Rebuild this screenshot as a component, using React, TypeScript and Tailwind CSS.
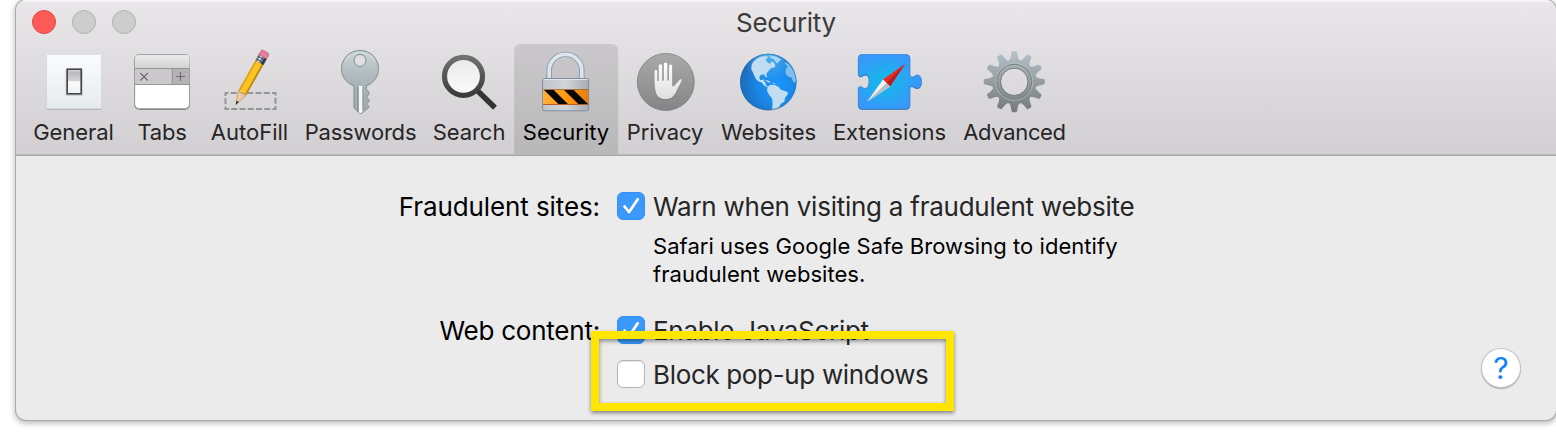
import type { ReactNode } from "react";

function GeneralIcon() {
  return (
    <svg width="70" height="70" viewBox="39 47 70 70">
      <defs>
        <linearGradient id="plate" x1="0" y1="0" x2="0" y2="1">
          <stop offset="0" stopColor="#fbfcfd" />
          <stop offset="1" stopColor="#e6eaee" />
        </linearGradient>
        <linearGradient id="lever" x1="0" y1="0" x2="0" y2="1">
          <stop offset="0" stopColor="#e9e9eb" />
          <stop offset="0.12" stopColor="#b9b9bd" />
          <stop offset="0.46" stopColor="#d2d2d5" />
          <stop offset="0.52" stopColor="#fafafa" />
          <stop offset="1" stopColor="#eef0f2" />
        </linearGradient>
      </defs>
      <rect x="46.5" y="55" width="55" height="54.7" rx="1" fill="#a3a5a8" />
      <rect x="46.5" y="54.5" width="55" height="54.3" rx="1" fill="url(#plate)" stroke="#d5d8db" strokeWidth="0.5" />
      <rect x="65.5" y="69" width="17.500" height="27" rx="1" fill="#b9bcc0" opacity="0.6" />
      <rect x="67.200" y="69.2" width="14" height="24.6" fill="url(#lever)" stroke="#45464b" strokeWidth="1.6" />
    </svg>
  );
}

function TabsIcon() {
  return (
    <svg width="70" height="70" viewBox="127 47 70 70">
      <defs>
        <linearGradient id="tabTop" x1="0" y1="0" x2="0" y2="1">
          <stop offset="0" stopColor="#ececec" />
          <stop offset="1" stopColor="#d3d1d3" />
        </linearGradient>
      </defs>
      <rect x="134.7" y="55" width="54.8" height="54.3" rx="4.5" fill="#fff" stroke="#77777a" strokeWidth="1" />
      <rect x="134.7" y="54.5" width="54.8" height="54" rx="4.5" fill="#fff" stroke="#939396" strokeWidth="0.8" />
      <path d="M135 68.500V59q0-4 4-4h46.500q4 0 4 4v9.500z" fill="url(#tabTop)" />
      <path d="M135 68.500h37.300v16H135z" fill="#cbc9cb" />
      <path d="M172.300 68.500h17v16h-17z" fill="#b4b2b5" />
      <path d="M135 68.500h54.500M135 84.500h54.500M172.300 68.500v16" stroke="#8e8c90" strokeWidth="0.900" />
      <path d="M140.300 73l7.500 7.500m0-7.500l-7.500 7.500M176 76.500h9m-4.500-4.500v9" stroke="#6d6c70" strokeWidth="1.200" fill="none" />
    </svg>
  );
}

function AutoFillIcon() {
  return (
    <svg width="70" height="70" viewBox="214.500 47 70 70">
      <rect x="225" y="93" width="50" height="16" fill="none" stroke="#959597" strokeWidth="2" strokeDasharray="6 2.250" strokeDashoffset="3" />
      <g transform="translate(235.300 104.700) rotate(29.300)">
        <path d="M-4.400-13L0 0L4.400-13z" fill="#ecc9a0" stroke="#a58762" strokeWidth="0.500" />
        <path d="M-1.300-3.800L0 0l1.300-3.800z" fill="#222" />
        <path d="M-4.600-49h9.200v36l-2.300-1.500l-2.300 1.500l-2.300-1.500l-2.300 1.500z" fill="#fcc321" />
        <path d="M-4.600-49h1.600v35l-1.600 1z" fill="#dda01a" />
        <path d="M2.800-49h1.800v36l-1.800-1.200z" fill="#b98518" />
        <rect x="-4.600" y="-55" width="9.200" height="7" fill="#77838d" />
        <rect x="-2.500" y="-55" width="2" height="7" fill="#dbe5e9" />
        <path d="M-4.600-50h9.200M-4.600-53h9.200" stroke="#3b4650" strokeWidth="0.900" />
        <path d="M2-55h2.600v7H2z" fill="#343c45" />
        <path d="M-4.600-55v-3.500q0-2.500 2.500-2.500h4.200q2.500 0 2.500 2.500v3.500z" fill="#e8799f" stroke="#b45a78" strokeWidth="0.500" />
      </g>
    </svg>
  );
}

function PasswordsIcon() {
  return (
    <svg width="70" height="70" viewBox="326 47 70 70">
      <defs>
        <linearGradient id="keyFill" x1="0" y1="0" x2="0" y2="1">
          <stop offset="0" stopColor="#c9d4d6" />
          <stop offset="0.500" stopColor="#a9b5b9" />
          <stop offset="1" stopColor="#a3a9ac" />
        </linearGradient>
      </defs>
      <path
        fillRule="evenodd"
        d="M360 50.500c10.500 0 18.500 8 18.500 18.200c0 8-5 14.300-12 17.300v3.500l2.300 2.500v2.500l-2.300 2.500l2.300 2.500v2.300l-2.300 2.300l2.300 2v1.500l-6.800 5.300q-1.500 1-3 0L354 107.500V86c-7.500-2.800-12.500-9.300-12.500-17.300c0-10.200 8-18.200 18.500-18.200zM360 54.400a6 6 0 1 0 0 12a6 6 0 1 0 0-12z"
        fill="url(#keyFill)"
        stroke="#828d91"
        strokeWidth="1"
      />
      <path d="M346 61q4-8 14-8.500q10 .500 14 8.500" stroke="#dce4e6" strokeWidth="1" fill="none" opacity="0.700" />
      <path d="M359 86h3.400v26l-1.400 1h-2z" fill="#f4f6f7" />
      <path d="M357.800 87v24" stroke="#868e92" strokeWidth="1" />
      <path d="M363 87v23" stroke="#8c9599" strokeWidth="0.800" />
    </svg>
  );
}

function SearchIcon() {
  return (
    <svg width="70" height="70" viewBox="434 47 70 70">
      <defs>
        <linearGradient id="lens" x1="0" y1="0" x2="0" y2="1">
          <stop offset="0" stopColor="#e9e9ea" />
          <stop offset="1" stopColor="#fbfbfb" />
        </linearGradient>
        <linearGradient id="rim" x1="0" y1="0" x2="0" y2="1">
          <stop offset="0" stopColor="#707070" />
          <stop offset="1" stopColor="#3b3b3b" />
        </linearGradient>
      </defs>
      <path d="M476 89.200L495 107.700" stroke="#343434" strokeWidth="5.500" />
      <circle cx="463.500" cy="76.300" r="19" fill="url(#lens)" stroke="url(#rim)" strokeWidth="5.200" />
    </svg>
  );
}

function SecurityIcon() {
  return (
    <svg width="70" height="70" viewBox="531 47 70 70">
      <defs>
        <linearGradient id="metal" x1="0" y1="0" x2="1" y2="0">
          <stop offset="0" stopColor="#bfc5ca" />
          <stop offset="0.500" stopColor="#d2d5d8" />
          <stop offset="1" stopColor="#a6acb3" />
        </linearGradient>
        <linearGradient id="hazard" x1="0" y1="0" x2="1" y2="0">
          <stop offset="0" stopColor="#ffae38" />
          <stop offset="0.600" stopColor="#ff950b" />
          <stop offset="1" stopColor="#e87d0c" />
        </linearGradient>
      </defs>
      <path d="M549.200 79V70.600a16.300 16.300 0 0 1 32.600 0V79" fill="none" stroke="#8496ab" strokeWidth="5.400" />
      <path d="M549.200 79V70.600a16.300 16.300 0 0 1 32.600 0V79" fill="none" stroke="#dce6ea" strokeWidth="3.700" />
      <rect x="542.600" y="78.500" width="46" height="32.300" rx="2" fill="url(#metal)" stroke="#7d8ca1" strokeWidth="1" />
      <path d="M543.500 79.500h44" stroke="#e7eaec" strokeWidth="0.900" />
      <rect x="543.200" y="89.500" width="45" height="15" fill="url(#hazard)" />
      <path d="M544 90h9.700l14.300 14h-9.700zM564 90h9.700l14.300 14h-9.700z" fill="#090703" />
      <path d="M543.200 89.500h45" stroke="#9b6a24" strokeWidth="0.800" />
      <path d="M543.200 104.500h45" stroke="#b95e22" strokeWidth="1" />
    </svg>
  );
}

function PrivacyIcon() {
  const hand =
    "M655 84V71.500q0-1.700 1.400-1.700q1.400 0 1.400 1.700V81h1.400V66q0-1.800 1.700-1.800q1.700 0 1.700 1.800v14.500h1.700V64.300q0-1.700 1.800-1.700q1.800 0 1.800 1.700V80.500h1.600V66.200q0-1.700 1.600-1.700q1.600 0 1.600 1.700V86q1.500 1 3-1.200l4-4.600q1.200-1.400 2.500-.6q-.2 2.600-2.200 5.700q-2.300 4-3.600 7q-2.800 7-10.700 7q-8 0-9.500-7.200q-1-4-1-8.100z";
  return (
    <svg width="70" height="70" viewBox="630.500 47 70 70">
      <defs>
        <linearGradient id="disc" x1="0" y1="0" x2="0" y2="1">
          <stop offset="0" stopColor="#a9a9a9" />
          <stop offset="1" stopColor="#858587" />
        </linearGradient>
        <linearGradient id="palm" x1="0" y1="0" x2="0" y2="1">
          <stop offset="0" stopColor="#fff" />
          <stop offset="1" stopColor="#dededf" />
        </linearGradient>
      </defs>
      <circle cx="666.300" cy="82" r="28.500" fill="url(#disc)" stroke="#7f7f81" strokeWidth="0.800" />
      <path d={hand} fill="#68686a" opacity="0.550" transform="translate(0 1)" />
      <path d={hand} fill="url(#palm)" />
    </svg>
  );
}

function WebsitesIcon() {
  return (
    <svg width="70" height="70" viewBox="734 47 70 70">
      <defs>
        <radialGradient id="ocean" cx="0.660" cy="0.560" r="0.660">
          <stop offset="0" stopColor="#1a96fb" />
          <stop offset="0.550" stopColor="#1a86e4" />
          <stop offset="1" stopColor="#1c6bb8" />
        </radialGradient>
        <radialGradient id="shine" cx="0.500" cy="0" r="0.500">
          <stop offset="0" stopColor="#6fcaf8" stopOpacity="0.800" />
          <stop offset="1" stopColor="#55b8f5" stopOpacity="0" />
        </radialGradient>
        <clipPath id="globe">
          <circle cx="768.300" cy="82" r="28" />
        </clipPath>
      </defs>
      <circle cx="768.300" cy="83" r="28" fill="#9a9ca1" opacity="0.500" />
      <circle cx="768.300" cy="82" r="28.200" fill="url(#ocean)" />
      <circle cx="768.300" cy="82" r="28.200" fill="url(#shine)" />
      <g clipPath="url(#globe)" fill="#c0ddf2">
        <path d="M751.500 65.500l1.500-3.500l4-3.500l4.500-2l5-.5l1.500 1.500l-2.500 2l1 2l3.500 2.500l1.500-2.500l2.500 1l1.500 3.500l-1.500 1.500l-3 .5l-2.500 3l-2 2.500l.3 4l-1.300-.3l-1.200-2.700l-3.300.3l-1.700 2l.7 3l2.500.2l1.200-1l.3 2.500l1.500 1l.3 2.500l2.200 1.300l-1.500.7l-3-2l-1.500-2.200l-4-1.600l-2.700-3.200l-2-5l-2-3.500z" />
        <path d="M770 55.500l6 1l5.500 3l-2 1.500l-2 2.500l-2-1.500l-1.500-2.500l-3.500-2z" fill="#a8d6f3" />
        <path d="M764.500 80.300l3.500.2l3.300 1.700l-2.500.3zM772.500 82.800l3 .5l-1.500 1z" />
        <path d="M767.500 87l2.500-2.300l5 .3l4 2.200l1.500 2.300l7 2.500l.5 2l-3 3.700l-.7 4l-3.300 2l-2 3.500l-3.300 2.500l-1 4.500l-1.900.5l-.8-4l.6-6.500l-.4-5.500l-3.500-4.500l-1.700-4z" />
        <path d="M784 62.500l3 .5l3 2.500l4.500 7l1.800 6l-1 4.500l-2-1l-2-4.500l-3.500-1l-2.300-3.500l.2-4l1.800-2.500z" fill="#7fbfee" />
      </g>
      <circle cx="768.300" cy="82" r="27.800" fill="none" stroke="#1b65a7" strokeWidth="0.800" opacity="0.600" />
    </svg>
  );
}

function ExtensionsIcon() {
  const piece =
    "M861.500 54.500H906q4 0 4 4V75q.3 3 3.500 1.700q2.500-2.200 4.500-1.700q3.500 1 3.500 6.500q0 6.200-3.800 6.800q-2 .2-4.200-1.600q-3.500-1.500-3.500 2V105q0 4-4 4h-44q-3.700 0-3.700-4V89q.3-3.500 3.500-2q2.300 2 4 1.500q3.200-1 3.200-7t-2.700-6.800q-2.500-.5-4.500 1.500q-3 1.500-3.500-2V58.500q0-4 3.200-4z";
  return (
    <svg width="70" height="70" viewBox="855 47 70 70">
      <defs>
        <radialGradient id="puzzle" cx="0.420" cy="0.500" r="0.550">
          <stop offset="0" stopColor="#13bbe9" />
          <stop offset="0.500" stopColor="#24aaf0" />
          <stop offset="1" stopColor="#3996fb" />
        </radialGradient>
      </defs>
      <path d={piece} fill="#3a6da5" transform="translate(0 0.800)" />
      <path d={piece} fill="url(#puzzle)" stroke="#2f7fd5" strokeWidth="0.700" />
      <path d="M905 64L883 79.500L890 86.500z" fill="#ed2820" />
      <path d="M905 64L886.500 83L890 86.500z" fill="#b81c25" />
      <path d="M867.300 101.500L883 79.500L890 86.500z" fill="#f4f4f4" />
      <path d="M867.300 101.500L886.500 83L890 86.500z" fill="#b8bec3" />
    </svg>
  );
}

const teeth = [0, 30, 60, 90, 120, 150, 180, 210, 240, 270, 300, 330];

function AdvancedIcon() {
  return (
    <svg width="70" height="70" viewBox="979.500 47 70 70">
      <defs>
        <linearGradient id="steel" gradientUnits="userSpaceOnUse" x1="0" y1="51" x2="0" y2="113">
          <stop offset="0" stopColor="#b3c3c9" />
          <stop offset="0.500" stopColor="#959da0" />
          <stop offset="1" stopColor="#737978" />
        </linearGradient>
        <mask id="gear" maskUnits="userSpaceOnUse" x="979" y="47" width="70" height="70">
          <g fill="#fff">
            <circle cx="1013.800" cy="81.800" r="22.300" />
            {teeth.map((angle) => (
              <path
                key={angle}
                d="M1008.600 61l1.600-4l.8-4.500q.3-1.200 1.300-1.200h3q1 0 1.300 1.200l.8 4.500l1.600 4z"
                transform={`rotate(${angle} 1013.800 81.800)`}
              />
            ))}
          </g>
          <circle cx="1013.800" cy="81.800" r="13.400" fill="#000" />
        </mask>
      </defs>
      <rect x="980" y="48" width="69" height="68" fill="url(#steel)" mask="url(#gear)" />
      <circle cx="1013.800" cy="81.800" r="17.500" fill="none" stroke="#72797b" strokeWidth="0.900" />
      <circle cx="1013.800" cy="81.800" r="18.500" fill="none" stroke="#bac3c5" strokeWidth="0.700" />
      <circle cx="1013.800" cy="81.800" r="13.700" fill="none" stroke="#70787a" strokeWidth="0.900" />
    </svg>
  );
}

type Item = { label: string; width: string; text: string; icon: ReactNode; active?: boolean };

const items: Item[] = [
  { label: "General", width: "w-[97px]", text: "tracking-[-0.05px]", icon: <GeneralIcon /> },
  { label: "Tabs", width: "w-[80px]", text: "tracking-[-0.2px]", icon: <TabsIcon /> },
  { label: "AutoFill", width: "w-[95px]", text: "tracking-[0px]", icon: <AutoFillIcon /> },
  { label: "Passwords", width: "w-[127px]", text: "tracking-[-0.2px]", icon: <PasswordsIcon /> },
  { label: "Search", width: "w-[90px]", text: "tracking-[-0.05px]", icon: <SearchIcon /> },
  { label: "Security", width: "w-[104px]", text: "tracking-[0px]", icon: <SecurityIcon />, active: true },
  { label: "Privacy", width: "w-[94px]", text: "tracking-[-0.1px]", icon: <PrivacyIcon /> },
  { label: "Websites", width: "w-[113px]", text: "tracking-[0px]", icon: <WebsitesIcon /> },
  { label: "Extensions", width: "w-[129px]", text: "tracking-[0px]", icon: <ExtensionsIcon /> },
  { label: "Advanced", width: "w-[121px]", text: "tracking-[-0.35px]", icon: <AdvancedIcon /> },
];

function Checkbox({ checked = false }: { checked?: boolean }) {
  if (!checked) {
    return <span className="size-7 shrink-0 rounded-[6px] border border-[#b4b4b4] bg-white shadow-[inset_0_1px_1px_#e3e3e3]" />;
  }
  return (
    <span className="size-7 shrink-0 rounded-[6px] border border-[#3690f5] bg-[#3b99fc]">
      <svg width="26" height="26" viewBox="1 1 26 26" fill="none">
        <path d="M7.500 15.300L12 21L20.800 8" stroke="#2d7fdd" strokeWidth="3" strokeLinecap="round" strokeLinejoin="round" />
        <path d="M7.500 14.500L12 20.200L20.800 7.300" stroke="#fff" strokeWidth="2.800" strokeLinecap="round" strokeLinejoin="round" />
      </svg>
    </span>
  );
}

export default function App() {
  return (
    <div className="relative h-[436px] w-[1556px] overflow-hidden bg-white pl-4 font-['Inter',sans-serif]">
      <div className="flex h-[420px] w-[1540px] flex-col overflow-hidden rounded-[10px] bg-[#ebebeb] shadow-[0_0_0_1px_#a9a9a9,0_2px_6px_1px_rgba(0,0,0,0.3)]">
        <header className="flex h-[156px] shrink-0 flex-col border-b border-[#a5a4a5] bg-linear-to-b from-[#e9e7e9] to-[#d1cfd1] shadow-[inset_0_2px_0_#f4f2f4,inset_0_-1px_0_#bcbabc]">
          <div className="flex h-11 shrink-0 items-center pl-4">
            <div className="flex w-[160px] gap-4">
              <span className="size-6 rounded-full border border-[#e2453f] bg-[#fc5b57]" />
              <span className="size-6 rounded-full border border-[#b1b1b1] bg-[#cdcdcd]" />
              <span className="size-6 rounded-full border border-[#b1b1b1] bg-[#cdcdcd]" />
            </div>
            <h1 className="ml-[494px] flex w-[200px] justify-center pt-0.5 text-[26px] leading-[42px] text-[#3b3a3b]">
              <span className="whitespace-nowrap tracking-[-0.3px]">Security</span>
            </h1>
          </div>
          <nav className="flex h-[110px] pl-[9px]">
            {items.map((item) => (
              <button
                key={item.label}
                className={`flex flex-col items-center rounded-t-[6px] pt-[3px] ${item.width} ${item.active ? "bg-linear-to-b from-[#cac8ca] to-[#b9b8b9] text-black" : "text-[#262526]"}`}
              >
                {item.icon}
                <span className={`whitespace-nowrap text-[22px] leading-[30px] ${item.text}`}>{item.label}</span>
              </button>
            ))}
          </nav>
        </header>
        <main className="flex flex-1 justify-between pt-9 pr-9">
          <div className="flex flex-col text-[26px] leading-[30px] text-[#262626]">
            <div className="flex h-7">
              <span className="flex w-[584px] justify-end whitespace-nowrap text-black tracking-[-0.1px]">Fraudulent sites:</span>
              <label className="ml-[17px] flex gap-2">
                <Checkbox checked />
                <span className="whitespace-nowrap tracking-[-0.25px]">Warn when visiting a fraudulent website</span>
              </label>
            </div>
            <p className="mt-3 ml-[637px] whitespace-nowrap text-[22px] leading-7 text-black">
              <span className="tracking-[0.05px]">Safari uses Google Safe Browsing to identify</span>
              <br />
              <span className="tracking-[0.05px]">fraudulent websites.</span>
            </p>
            <div className="mt-7 flex h-7">
              <span className="flex w-[584px] justify-end whitespace-nowrap text-black tracking-[-0.22px]">Web content:</span>
              <label className="ml-[17px] flex gap-2">
                <Checkbox checked />
                <span className="whitespace-nowrap tracking-[-0.3px]">Enable JavaScript</span>
              </label>
            </div>
            <label className="mt-4 ml-[601px] flex h-7 gap-2">
              <Checkbox />
              <span className="whitespace-nowrap tracking-[-0.34px]">Block pop-up windows</span>
            </label>
          </div>
          <button className="mb-[33px] flex size-[38px] items-center justify-center self-end rounded-full bg-white text-[30px] leading-none text-[#0f80ff] shadow-[0_0_0_1px_#c4c4c4,0_1px_1px_1px_#b0b0b0]">
            ?
          </button>
        </main>
      </div>
      <div className="absolute top-[331px] left-[591px] h-[80px] w-[363px] border-8 border-[#ffe600] shadow-[0_2px_4px_rgba(0,0,0,0.45),inset_0_2px_4px_rgba(0,0,0,0.45)]" />
    </div>
  );
}
